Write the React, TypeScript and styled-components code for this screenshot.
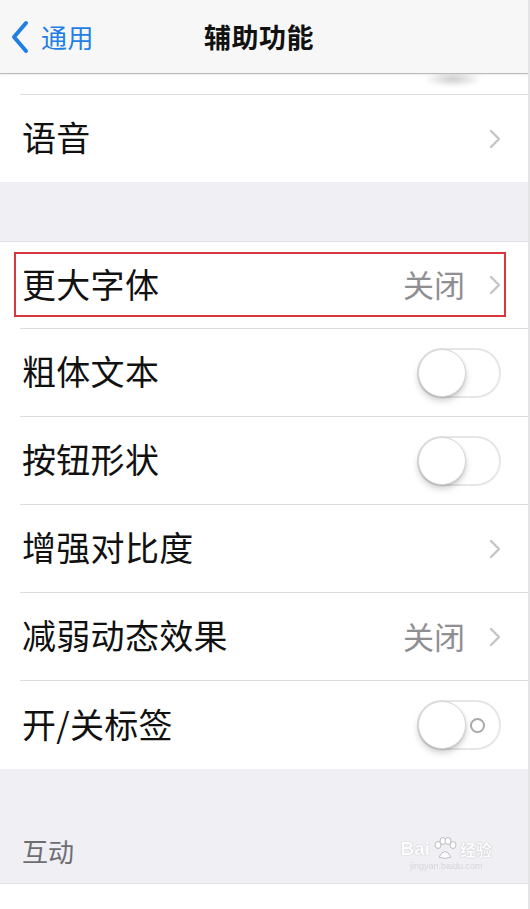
import React from "react";
import styled, { createGlobalStyle } from "styled-components";

const GlobalStyle = createGlobalStyle`
  body {
    margin: 0;
    background: #ffffff;
    font-family: "Noto Sans CJK SC", "Noto Sans", sans-serif;
  }
`;

const Page = styled.div`
  width: 530px;
  height: 909px;
  overflow: hidden;
  background: #ffffff;
  box-sizing: border-box;
  border-right: 2px solid #e4e4e6;
  display: flex;
  flex-direction: column;
`;

const NavBar = styled.div`
  height: 73px;
  flex-shrink: 0;
  background: #f7f7f7;
  border-bottom: 1px solid #b9b9bb;
  box-shadow: 0 1px 2px rgba(0, 0, 0, 0.08);
  display: grid;
  grid-template-columns: 1fr auto 1fr;
  align-items: center;
  padding-right: 10px;
  position: relative;
  z-index: 1;
`;

const BackButton = styled.div`
  display: flex;
  align-items: center;
  gap: 11px;
  padding-left: 10px;
  color: #1f7fe4;
  font-size: 26px;
  letter-spacing: 0.5px;
`;

const Title = styled.div`
  font-size: 27px;
  font-weight: 700;
  color: #111111;
  letter-spacing: 0.5px;
`;

const Group = styled.div`
  background: #ffffff;
  display: flex;
  flex-direction: column;
  flex-shrink: 0;
`;

const Spacer = styled.div<{ $h: number }>`
  height: ${(p) => p.$h}px;
  background: #efeff4;
  flex-shrink: 0;
  border-bottom: 1px solid #e2e2e6;
  box-sizing: border-box;
  display: flex;
  align-items: flex-end;
  position: relative;
`;

const SectionLabel = styled.div`
  padding: 0 0 14px 22px;
  font-size: 26px;
  color: #6d6d72;
`;

const Row = styled.div<{ $h?: number }>`
  height: ${(p) => p.$h ?? 88}px;
  padding-left: 20px;
  display: flex;
  position: relative;
  overflow: hidden;
`;

const RowInner = styled.div<{ $last?: boolean; $clip?: boolean }>`
  flex: 1;
  display: flex;
  align-items: ${(p) => (p.$clip ? "flex-end" : "center")};
  padding-left: 2px;
  padding-right: 27px;
  border-bottom: ${(p) => (p.$last ? "none" : "1px solid #dcdcdf")};
`;

const Label = styled.div`
  flex: 1;
  font-size: 34px;
  color: #111111;
  letter-spacing: 0.3px;
  padding-bottom: 4px;
`;

const Value = styled.div`
  font-size: 31px;
  color: #8e8e93;
  margin-right: 24px;
  padding-bottom: 3px;
`;

const Highlight = styled.div`
  position: absolute;
  left: 14px;
  right: 22px;
  top: 10px;
  bottom: 12px;
  border: 2px solid #d8383d;
  pointer-events: none;
`;

const Switch = styled.div`
  width: 84px;
  height: 50px;
  box-sizing: border-box;
  border: 2px solid #e6e6e8;
  border-radius: 25px;
  background: #ffffff;
  position: relative;
  display: flex;
  align-items: center;
  justify-content: flex-end;
  padding-right: 14px;
`;

const PeekShadow = styled.div`
  width: 56px;
  height: 14px;
  margin-right: 20px;
  margin-bottom: 8px;
  border-radius: 50%;
  background: radial-gradient(ellipse at center, rgba(0, 0, 0, 0.22) 0%, rgba(0, 0, 0, 0.06) 55%, rgba(0, 0, 0, 0) 75%);
  filter: blur(2px);
`;

const Knob = styled.div`
  position: absolute;
  left: -1px;
  top: -1px;
  width: 48px;
  height: 48px;
  border-radius: 50%;
  background: #ffffff;
  border: 1px solid #d8d8da;
  box-sizing: border-box;
  box-shadow: 0 4px 6px rgba(0, 0, 0, 0.18), 0 1px 2px rgba(0, 0, 0, 0.12);
`;

const OffMark = styled.div`
  width: 11px;
  height: 11px;
  border-radius: 50%;
  border: 2px solid #a9a9ad;
`;

const Watermark = styled.div`
  position: absolute;
  right: 36px;
  bottom: 12px;
  display: flex;
  flex-direction: column;
  align-items: center;
  color: #ffffff;
  font-family: "Liberation Sans", sans-serif;
  text-shadow: 0 0 1px #b8b8bc, 0 0 1px #b8b8bc;
  opacity: 0.9;
`;

const WmTop = styled.div`
  display: flex;
  align-items: center;
  font-size: 19px;
  font-weight: 700;
  gap: 2px;
`;

const WmCn = styled.span`
  font-family: "Noto Sans CJK SC", sans-serif;
  font-size: 16px;
`;

const WmUrl = styled.div`
  font-size: 9px;
  color: #d4d4d8;
  text-shadow: none;
`;

const Chevron = () => (
  <svg width="12" height="20" viewBox="0 0 12 20">
    <path d="M2 2 L10 10 L2 18" fill="none" stroke="#c4c4c9" strokeWidth="2.4" strokeLinecap="round" strokeLinejoin="round" />
  </svg>
);

const BackChevron = () => (
  <svg width="20" height="34" viewBox="0 0 20 34">
    <path d="M16 3 L4 17 L16 31" fill="none" stroke="#1f7fe4" strokeWidth="4" strokeLinecap="round" strokeLinejoin="round" />
  </svg>
);

const Paw = () => (
  <svg width="26" height="24" viewBox="0 0 26 24">
    <g fill="#ffffff" stroke="#b8b8bc" strokeWidth="1">
      <ellipse cx="6" cy="8" rx="3" ry="3.5" />
      <ellipse cx="11" cy="4" rx="3" ry="3.5" />
      <ellipse cx="16" cy="4" rx="3" ry="3.5" />
      <ellipse cx="21" cy="8" rx="3" ry="3.5" />
      <path d="M7 20 Q13 9 19 20 Q13 23 7 20 Z" />
    </g>
  </svg>
);

type Item = {
  label: string;
  kind: "chevron" | "switch";
  value?: string;
  mark?: boolean;
  highlight?: boolean;
};

const items: Item[] = [
  { label: "更大字体", kind: "chevron", value: "关闭", highlight: true },
  { label: "粗体文本", kind: "switch" },
  { label: "按钮形状", kind: "switch" },
  { label: "增强对比度", kind: "chevron" },
  { label: "减弱动态效果", kind: "chevron", value: "关闭" },
  { label: "开/关标签", kind: "switch", mark: true },
];

const App = () => {
  return (
    <Page>
      <GlobalStyle />
      <NavBar>
        <BackButton>
          <BackChevron />
          <span>通用</span>
        </BackButton>
        <Title>辅助功能</Title>
        <div />
      </NavBar>

      <Group>
        <Row $h={21}>
          <RowInner $clip>
            <Label />
            <PeekShadow />
          </RowInner>
        </Row>
        <Row $h={87}>
          <RowInner $last>
            <Label>语音</Label>
            <Chevron />
          </RowInner>
        </Row>
      </Group>

      <Spacer $h={60} />

      <Group>
        {items.map((item, i) => (
          <Row key={item.label} $h={i === 0 ? 87 : 88}>
            <RowInner $last={i === items.length - 1}>
              <Label>{item.label}</Label>
              {item.value && <Value>{item.value}</Value>}
              {item.kind === "chevron" ? (
                <Chevron />
              ) : (
                <Switch>
                  <Knob />
                  {item.mark && <OffMark />}
                </Switch>
              )}
            </RowInner>
            {item.highlight && <Highlight />}
          </Row>
        ))}
      </Group>

      <Spacer $h={115}>
        <SectionLabel>互动</SectionLabel>
        <Watermark>
          <WmTop>
            <span>Bai</span>
            <Paw />
            <WmCn>经验</WmCn>
          </WmTop>
          <WmUrl>jingyan.baidu.com</WmUrl>
        </Watermark>
      </Spacer>
    </Page>
  );
};

export default App;
